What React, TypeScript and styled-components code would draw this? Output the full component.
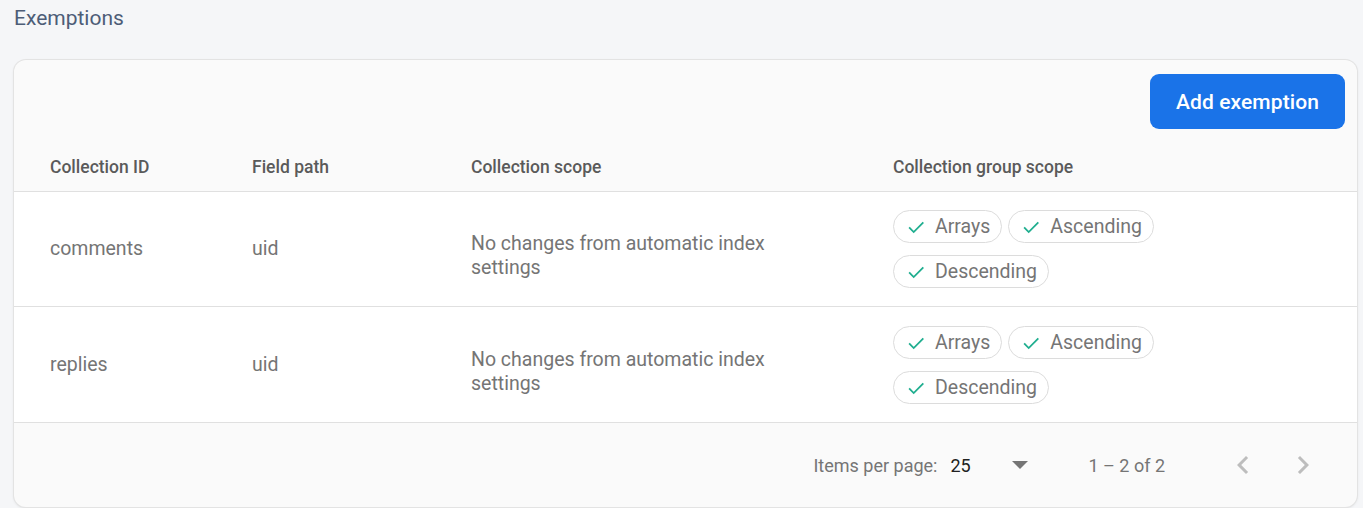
import React from "react";
import styled, { createGlobalStyle } from "styled-components";

const Global = createGlobalStyle`
  html, body { margin: 0; padding: 0; background: #f5f6f8; }
  body { font-family: Roboto, "Liberation Sans", sans-serif; }
  * { box-sizing: border-box; }
`;

const Page = styled.div`
  padding: 0 6px 0 14px;
  height: 508px;
  overflow: hidden;
`;

const Title = styled.h2`
  margin: 0;
  height: 60px;
  padding-top: 5px;
  font-size: 21px;
  line-height: 26px;
  font-weight: 400;
  color: #4d5d77;
`;

const Card = styled.div`
  background: #fafafa;
  border-radius: 12px;
  box-shadow: 0 0 0 1px #e3e3e3, 0 1px 3px rgba(0, 0, 0, 0.12);
  overflow: hidden;
`;

const Toolbar = styled.div`
  display: flex;
  justify-content: flex-end;
  padding: 14px 12px 11px;
`;

const PrimaryButton = styled.button`
  height: 55px;
  padding: 0 26px;
  border: none;
  border-radius: 9px;
  background: #1a73e8;
  color: #fff;
  font-family: inherit;
  font-size: 21px;
  font-weight: 500;
  letter-spacing: 0.1px;
`;

const Grid = styled.div`
  display: grid;
  grid-template-columns: 202px 219px 422px 1fr;
  padding-left: 36px;
  align-items: center;
`;

const HeaderRow = styled(Grid)`
  height: 52px;
  padding-top: 2px;
  border-bottom: 1px solid #e0e0e0;
`;

const HeaderCell = styled.div`
  font-size: 17.5px;
  font-weight: 500;
  color: #5a5a5a;
`;

const Row = styled(Grid)`
  height: 115px;
  background: #fff;
  border-bottom: 1px solid #e0e0e0;
  & + & {
    height: 116px;
    padding-top: 1px;
  }
`;

const Cell = styled.div`
  font-size: 19.5px;
  line-height: 24px;
  color: #757575;
`;

const ScopeCell = styled(Cell)`
  max-width: 310px;
  margin-top: 14px;
`;

const Chips = styled.div`
  display: flex;
  flex-wrap: wrap;
  gap: 12px 6px;
  max-width: 270px;
`;

const Chip = styled.span`
  display: inline-flex;
  align-items: center;
  gap: 8px;
  height: 33px;
  padding: 0 11px 0 11px;
  border: 1px solid #dcdcdc;
  border-radius: 17px;
  font-size: 19.5px;
  color: #757575;
  background: #fff;
`;

const Footer = styled.div`
  height: 84px;
  display: flex;
  align-items: center;
  justify-content: flex-end;
  padding-right: 24px;
  font-size: 18px;
  color: #757575;
`;

const PerPage = styled.div`
  display: flex;
  align-items: center;
`;

const Select = styled.div`
  display: flex;
  align-items: center;
  justify-content: space-between;
  width: 82px;
  margin-left: 13px;
  padding-right: 4px;
  color: #212121;
`;

const Range = styled.div`
  margin-left: 56px;
  margin-right: 48px;
`;

const NavButton = styled.span`
  display: inline-flex;
  width: 60px;
  justify-content: center;
`;

const Check = () => (
  <svg width="22" height="22" viewBox="0 0 24 24">
    <path d="M4.5 12.5l5 5L20 7" fill="none" stroke="#1fae8f" strokeWidth="2" />
  </svg>
);

const Chevron = ({ dir }: { dir: "left" | "right" }) => (
  <svg width="36" height="36" viewBox="0 0 24 24">
    <path
      d={dir === "left" ? "M15.4 7.4L14 6l-6 6 6 6 1.4-1.4L10.8 12z" : "M8.6 7.4L10 6l6 6-6 6-1.4-1.4L13.2 12z"}
      fill="#bdbdbd"
    />
  </svg>
);

const rows = [
  { id: "comments", path: "uid" },
  { id: "replies", path: "uid" },
];

export default function App() {
  return (
    <>
      <Global />
      <Page>
        <Title>Exemptions</Title>
        <Card>
          <Toolbar>
            <PrimaryButton>Add exemption</PrimaryButton>
          </Toolbar>
          <HeaderRow>
            <HeaderCell>Collection ID</HeaderCell>
            <HeaderCell>Field path</HeaderCell>
            <HeaderCell>Collection scope</HeaderCell>
            <HeaderCell>Collection group scope</HeaderCell>
          </HeaderRow>
          {rows.map((r) => (
            <Row key={r.id}>
              <Cell>{r.id}</Cell>
              <Cell>{r.path}</Cell>
              <ScopeCell>No changes from automatic index settings</ScopeCell>
              <Chips>
                {["Arrays", "Ascending", "Descending"].map((c) => (
                  <Chip key={c}>
                    <Check />
                    {c}
                  </Chip>
                ))}
              </Chips>
            </Row>
          ))}
          <Footer>
            <PerPage>
              Items per page:
              <Select>
                25
                <svg width="16" height="8" viewBox="0 0 16 8">
                  <path d="M0 0h16L8 8z" fill="#757575" />
                </svg>
              </Select>
            </PerPage>
            <Range>1 – 2 of 2</Range>
            <NavButton>
              <Chevron dir="left" />
            </NavButton>
            <NavButton>
              <Chevron dir="right" />
            </NavButton>
          </Footer>
        </Card>
      </Page>
    </>
  );
}
